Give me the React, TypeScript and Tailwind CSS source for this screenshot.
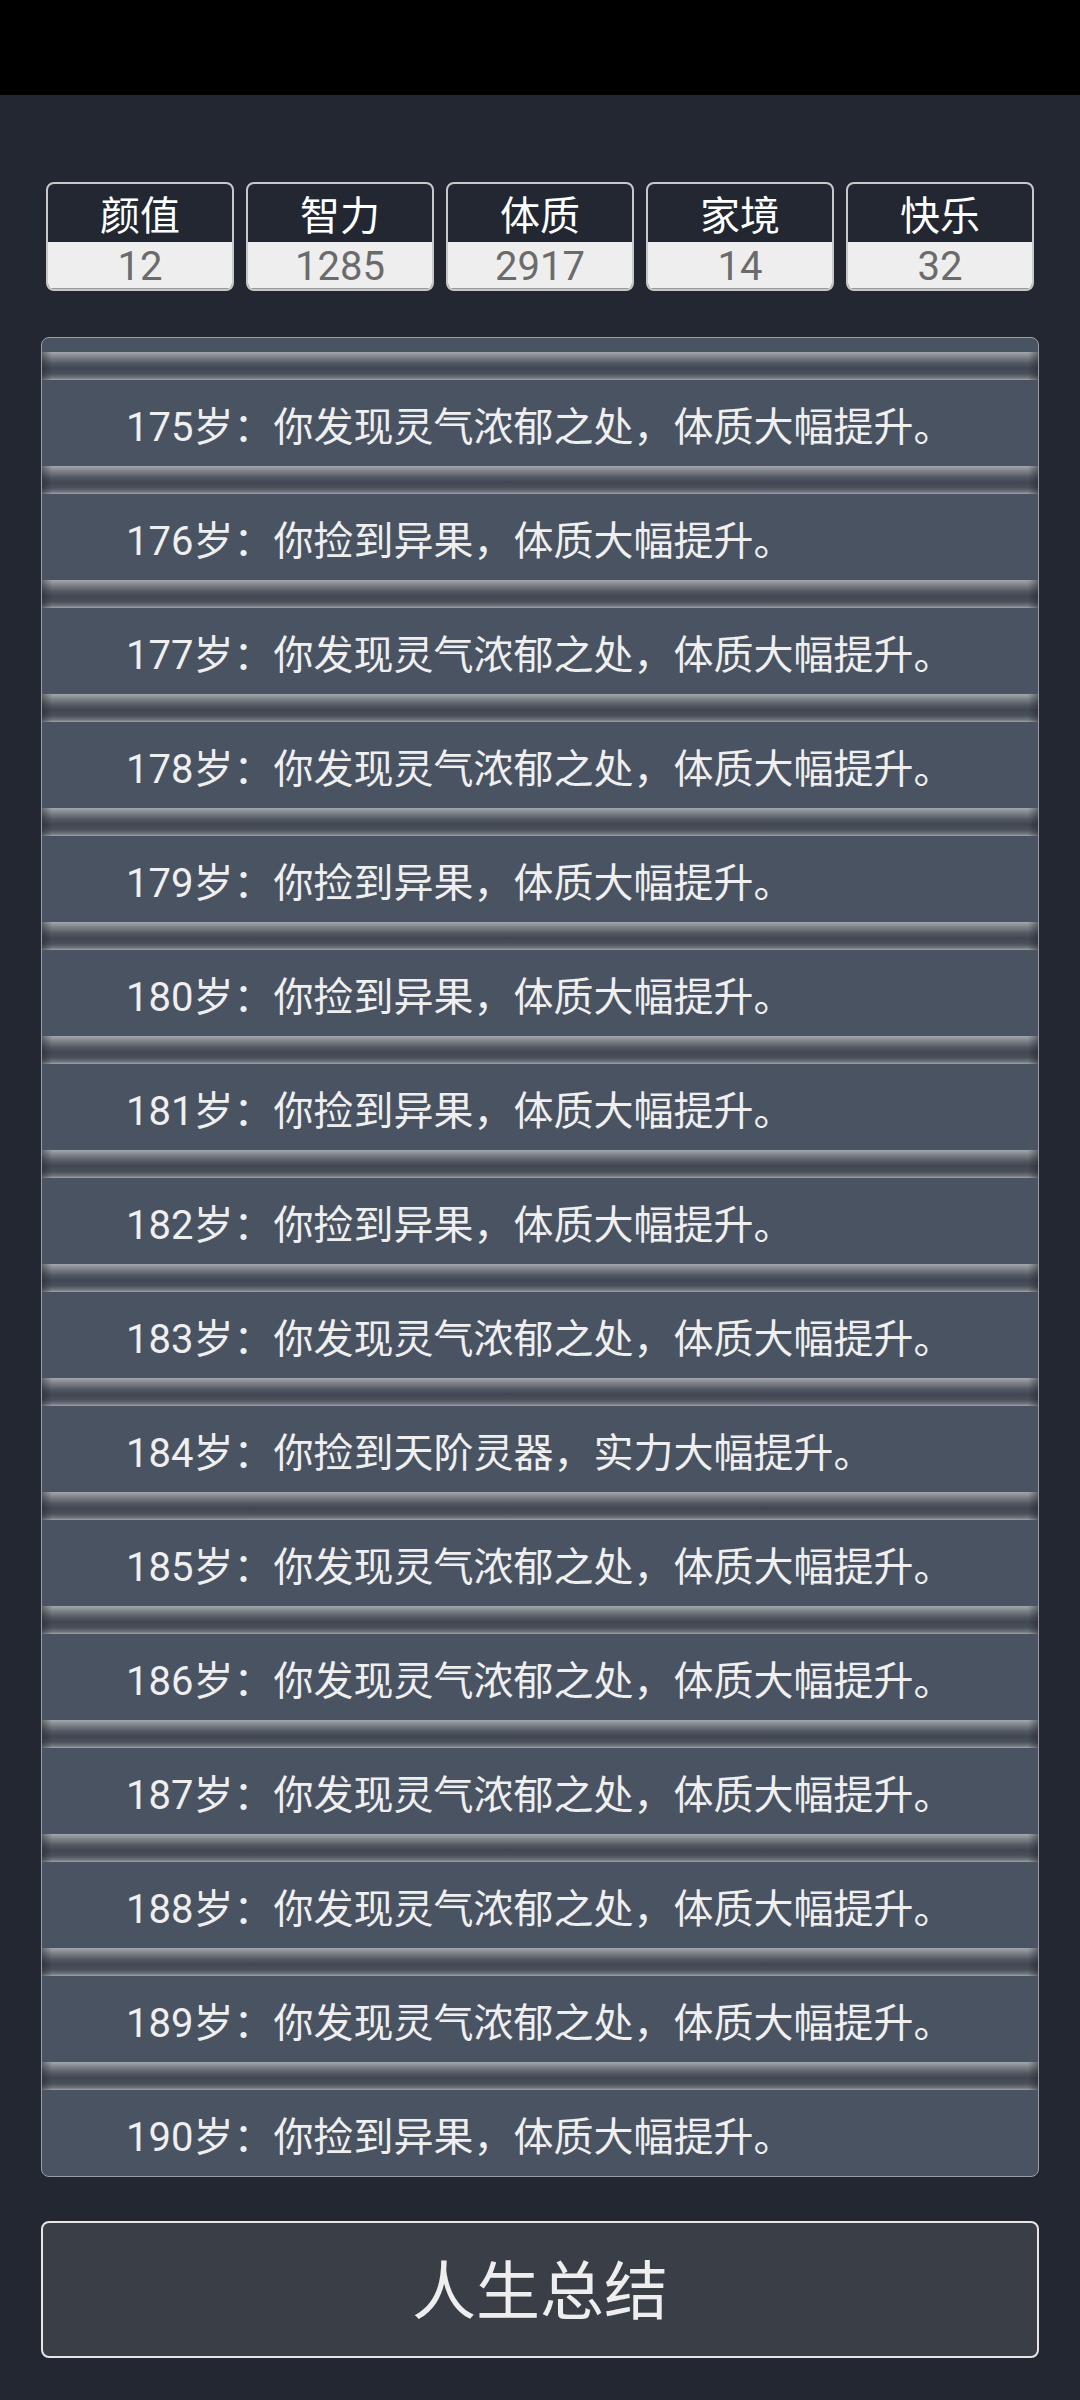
import React from 'react';

interface Stat {
  label: string;
  value: number;
}

const stats: Stat[] = [
  { label: '颜值', value: 12 },
  { label: '智力', value: 1285 },
  { label: '体质', value: 2917 },
  { label: '家境', value: 14 },
  { label: '快乐', value: 32 },
];

const FOUND = '你发现灵气浓郁之处，体质大幅提升。';
const FRUIT = '你捡到异果，体质大幅提升。';
const WEAPON = '你捡到天阶灵器，实力大幅提升。';

const events: { age: number; text: string }[] = [
  { age: 175, text: FOUND },
  { age: 176, text: FRUIT },
  { age: 177, text: FOUND },
  { age: 178, text: FOUND },
  { age: 179, text: FRUIT },
  { age: 180, text: FRUIT },
  { age: 181, text: FRUIT },
  { age: 182, text: FRUIT },
  { age: 183, text: FOUND },
  { age: 184, text: WEAPON },
  { age: 185, text: FOUND },
  { age: 186, text: FOUND },
  { age: 187, text: FOUND },
  { age: 188, text: FOUND },
  { age: 189, text: FOUND },
  { age: 190, text: FRUIT },
];

export default function App() {
  return (
    <div className="min-h-[2400px] bg-[#222731] flex flex-col font-['Roboto','Noto_Sans_CJK_SC',sans-serif]">
      {/* Status bar */}
      <div className="h-[95px] bg-black" />

      <div className="px-[41px] flex flex-col">
        {/* Attributes */}
        <div className="mt-[87px] mx-[5px] grid grid-cols-5 gap-[12px]">
          {stats.map((s) => (
            <div
              key={s.label}
              className="h-[109px] rounded-[8px] border-2 border-[#c8c8c8] overflow-hidden flex flex-col"
            >
              <div className="h-[58px] pt-[8px] flex items-center justify-center text-[40px] leading-none text-white">
                {s.label}
              </div>
              <div className="flex-1 pt-[3px] bg-[#eeeeee] border-b border-[#9a9a9a] flex items-center justify-center text-[40px] leading-none text-[#6b6b6b]">
                {s.value}
              </div>
            </div>
          ))}
        </div>

        {/* Life log */}
        <div className="mt-[46px] h-[1840px] rounded-[8px] border border-[#9a9ea4] bg-[#4a5362] pt-[14px] overflow-hidden">
          {events.map((e) => (
            <div key={e.age} className="flex flex-col">
              <div className="h-[28px] bg-[linear-gradient(to_right,rgba(30,34,40,.45),transparent_10px,transparent_calc(100%-10px),rgba(30,34,40,.45)),linear-gradient(to_bottom,#a3a7ad_0%,#7d8289_18%,#535963_40%,#414752_58%,#4b515b_78%,#6f747c_92%,#a0a4aa_100%)]" />
              <div className="h-[86px] pt-[10px] flex items-center pl-[84px] text-[40px] leading-none text-[#efefef] whitespace-nowrap">
                {e.age}岁：{e.text}
              </div>
            </div>
          ))}
        </div>

        {/* Summary button */}
        <button className="mt-[44px] h-[137px] pt-[6px] rounded-[8px] border-2 border-[#e6e6e6] bg-[#3a3e47] flex items-center justify-center text-[64px] leading-none text-[#eeeeee]">
          人生总结
        </button>
      </div>
    </div>
  );
}
